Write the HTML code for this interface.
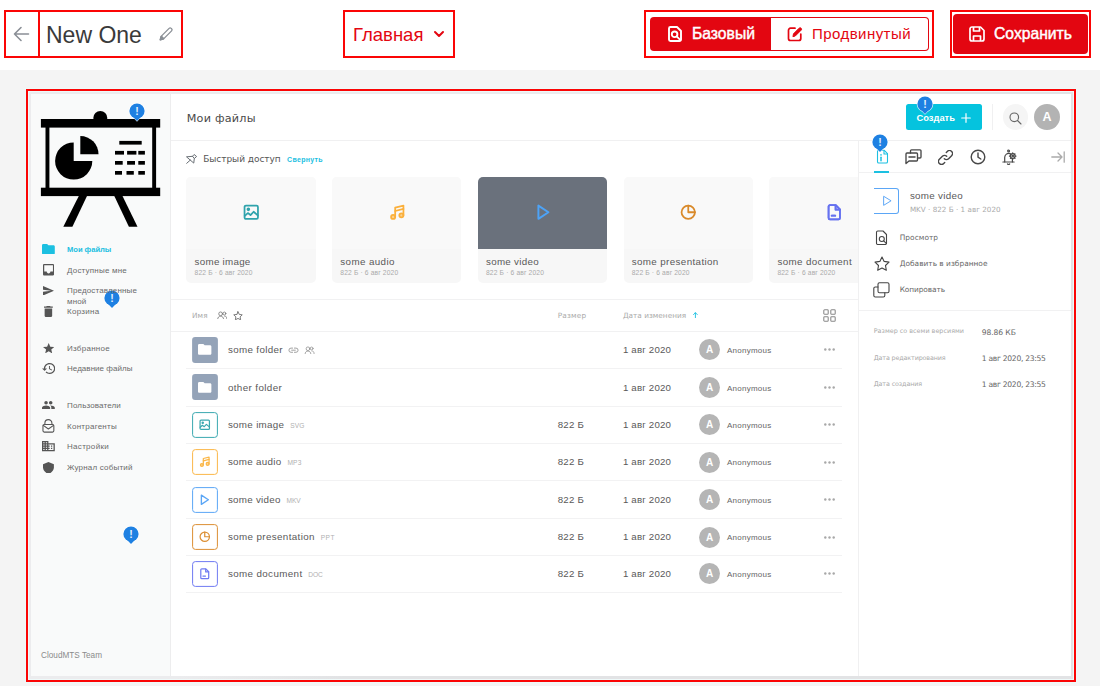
<!DOCTYPE html>
<html lang="ru">
<head>
<meta charset="utf-8">
<title>New One</title>
<style>
*{box-sizing:border-box;margin:0;padding:0}
html,body{width:1100px;height:686px;overflow:hidden;background:#f4f4f4;font-family:"Liberation Sans",sans-serif;}
.a{position:absolute}
.t{position:absolute;white-space:nowrap;line-height:1;}
.rb{position:absolute;border:2px solid #fb0505;}
#top{position:absolute;left:0;top:0;width:1100px;height:70px;background:#fff;}
#pv{position:absolute;left:31px;top:94px;width:1040px;height:582px;background:#fff;overflow:hidden;font-family:"Liberation Sans",sans-serif;color:#555;}
</style>
</head>
<body>
<div id="top">
  <!-- back -->
  <div class="rb" style="left:4px;top:10px;width:36px;height:48px"></div>
  <svg class="a" style="left:13px;top:26px" width="17" height="16" viewBox="0 0 17 16" fill="none" stroke="#8a8f96" stroke-width="1.6" stroke-linecap="round" stroke-linejoin="round"><path d="M15.5 8H1.5M8 1.5L1.5 8L8 14.5"/></svg>
  <!-- title -->
  <div class="rb" style="left:38px;top:10px;width:145px;height:48px"></div>
  <span class="t" id="ttl" style="left:46px;top:24px;font-size:23px;color:#3a3a3a;">New One</span>
  <svg class="a" style="left:158px;top:26px" width="16" height="16" viewBox="0 0 16 16" fill="none" stroke="#8a8f96" stroke-width="1.3" stroke-linejoin="round"><path d="M2.2 13.8l.9-3.4 8-8a1.5 1.5 0 0 1 2.1 0l.4.4a1.5 1.5 0 0 1 0 2.100l-8 8z"/><path d="M3.4 10.200l2.400 2.400" /><path d="M2.200 13.800l.9-3.400 2.500 2.500z" fill="#8a8f96"/></svg>
  <!-- page dropdown -->
  <div class="rb" style="left:343px;top:10px;width:112px;height:48px"></div>
  <span class="t" id="glav" style="left:353px;top:26px;font-size:18.5px;color:#e30611;">Главная</span>
  <svg class="a" style="left:433px;top:30px" width="12" height="9" viewBox="0 0 12 9" fill="none" stroke="#e30611" stroke-width="2" stroke-linecap="round" stroke-linejoin="round"><path d="M2 2l4 4 4-4"/></svg>
  <!-- mode switch -->
  <div class="rb" style="left:644px;top:10px;width:290px;height:48px"></div>
  <div class="a" style="left:650px;top:17px;width:121px;height:34px;background:#e30611;border-radius:4px 0 0 4px"></div>
  <div class="a" style="left:771px;top:17px;width:158px;height:34px;background:#fff;border:1px solid #e30611;border-left:none;border-radius:0 4px 4px 0"></div>
  <svg class="a" style="left:667px;top:26px" width="16" height="16" viewBox="0 0 16 16" fill="none" stroke="#fff" stroke-width="1.900" stroke-linejoin="round"><path d="M2 2.500a1.500 1.500 0 0 1 1.500-1.500h6.500l4 4v8.500a1.500 1.500 0 0 1-1.500 1.500h-9a1.500 1.500 0 0 1-1.500-1.500z"/><circle cx="7.600" cy="8.300" r="2.800"/><path d="M9.700 10.400l3 3" stroke-linecap="round"/></svg>
  <span class="t" id="baz" style="left:692px;top:26px;font-size:15.700px;color:#fff;-webkit-text-stroke:0.45px #fff;">Базовый</span>
  <svg class="a" style="left:787px;top:26px" width="16" height="16" viewBox="0 0 16 16" fill="none" stroke="#e30611" stroke-width="1.700" stroke-linejoin="round" stroke-linecap="round"><path d="M8 2.200h-4.500a2 2 0 0 0-2 2v8.300a2 2 0 0 0 2 2h8.300a2 2 0 0 0 2-2v-4.500"/><path d="M6 10.300l.5-2.500 5.600-5.600a1.400 1.400 0 0 1 2 2l-5.600 5.600z" fill="#e30611" stroke-width="1"/></svg>
  <span class="t" id="prod" style="left:812px;top:26px;font-size:15px;letter-spacing:0.45px;color:#e30611;">Продвинутый</span>
  <!-- save -->
  <div class="rb" style="left:950px;top:10px;width:141px;height:48px"></div>
  <div class="a" style="left:953px;top:14px;width:135px;height:40px;background:#e30611;border-radius:4px"></div>
  <svg class="a" style="left:969px;top:26px" width="16" height="16" viewBox="0 0 16 16" fill="none" stroke="#fff" stroke-width="1.700" stroke-linejoin="round"><path d="M1 3a2 2 0 0 1 2-2h8.500l3.500 3.500v8.500a2 2 0 0 1-2 2h-10a2 2 0 0 1-2-2z"/><path d="M4.500 1v4h6v-4"/><path d="M4.500 15v-5h7v5"/></svg>
  <span class="t" id="save" style="left:994px;top:26px;font-size:15.700px;color:#fff;-webkit-text-stroke:0.45px #fff;">Сохранить</span>
</div>
<!-- preview frame -->
<div class="rb" style="left:26px;top:89px;width:1050px;height:593px;background:linear-gradient(135deg,#ececee 0%,#ececee 45%,#e2e3e5 55%,#e2e3e5 100%);box-shadow:0 0 0 1px #eefafa, inset 0 0 0 1px #eefafa"></div>
<div id="pv"></div>
<div class="a" style="left:31.00px;top:94.00px;width:139.50px;height:582.00px;background:#f9fafa;border-right:1px solid #ededee;"></div>
<div class="a" style="left:170.50px;top:140.00px;width:900.50px;height:1.00px;background:#f0f0f1;"></div>
<div class="a" style="left:170.50px;top:299.00px;width:687.00px;height:1.00px;background:#f1f1f2;"></div>
<div class="a" style="left:170.50px;top:331.00px;width:687.00px;height:1.00px;background:#f1f1f2;"></div>
<svg class="a" style="left:31px;top:94px" width="140" height="140" viewBox="31 94 140 140" fill="#000">
<circle cx="100.3" cy="118" r="7"/>
<rect x="40.900" y="119" width="119.300" height="8.600"/>
<rect x="40.900" y="187.700" width="119.300" height="8.400"/>
<rect x="45.500" y="127" width="3.900" height="61"/>
<rect x="152.200" y="127" width="3.900" height="61"/>
<path d="M73.700 161V142.400A18.600 18.600 0 1 0 92.300 161Z"/>
<path d="M80.300 154.200V136A18.200 18.200 0 0 1 98.500 154.200Z"/>
<rect x="119.300" y="140.900" width="22.400" height="3.700"/>
<g>
<rect x="115" y="150.900" width="9" height="3.700"/><rect x="127.100" y="150.900" width="9.300" height="3.700"/><rect x="138.300" y="150.900" width="6.600" height="3.700"/>
<rect x="115" y="161" width="7.700" height="3.700"/><rect x="127.100" y="161" width="7.900" height="3.700"/><rect x="138.300" y="161" width="6.600" height="3.700"/>
<rect x="115" y="171" width="7" height="3.700"/><rect x="126.500" y="171" width="7.300" height="3.700"/><rect x="138.300" y="171" width="6.600" height="3.700"/>
</g>
<path d="M78.800 196H87L72.400 226.800H63.300Z"/>
<path d="M114.300 196H122.500L137.500 226.800H128.900Z"/>
</svg>
<svg class="a" style="left:42.00px;top:243.80px" width="12.80" height="10.50" viewBox="2 4 20 16" preserveAspectRatio="none" fill="#1cc0e1" ><path d="M10 4H4c-1.1 0-1.990.9-1.990 2L2 18c0 1.100.9 2 2 2h16c1.100 0 2-.9 2-2V8c0-1.100-.9-2-2-2h-8l-2-2z"/></svg>
<svg class="a" style="left:43.00px;top:264.20px" width="11.20" height="11.40" viewBox="3 3 18 18" preserveAspectRatio="none" fill="#555" ><path d="M19 3H4.990c-1.110 0-1.980.890-1.980 2L3 19c0 1.100.880 2 1.990 2H19c1.100 0 2-.9 2-2V5c0-1.110-.9-2-2-2zm0 12h-4c0 1.660-1.350 3-3 3s-3-1.340-3-3H4.990V5H19v10z"/></svg>
<svg class="a" style="left:42.90px;top:285.60px" width="11.30" height="9.50" viewBox="2 3 21 18" preserveAspectRatio="none" fill="#555" ><path d="M2.010 21L23 12 2.010 3 2 10l15 2-15 2z"/></svg>
<svg class="a" style="left:44.20px;top:306.00px" width="8.80" height="11.00" viewBox="5 3 14 18" preserveAspectRatio="none" fill="#555" ><path d="M6 19c0 1.100.9 2 2 2h8c1.100 0 2-.9 2-2V7H6v12zM19 4h-3.500l-1-1h-5l-1 1H5v2h14V4z"/></svg>
<svg class="a" style="left:42.80px;top:342.50px" width="11.40" height="10.40" viewBox="2 2 20 19" preserveAspectRatio="none" fill="#555" ><path d="M12 17.270L18.180 21l-1.640-7.030L22 9.240l-7.190-.610L12 2 9.190 8.630 2 9.240l5.460 4.730L5.820 21z"/></svg>
<svg class="a" style="left:41.50px;top:362.90px" width="13.30" height="10.90" viewBox="1 3 21 18" preserveAspectRatio="none" fill="#555" ><path d="M13 3c-4.970 0-9 4.030-9 9H1l3.890 3.890.070.140L9 12H6c0-3.870 3.130-7 7-7s7 3.130 7 7-3.130 7-7 7c-1.930 0-3.680-.790-4.940-2.060l-1.420 1.420C8.270 19.990 10.510 21 13 21c4.970 0 9-4.030 9-9s-4.030-9-9-9zm-1 5v5l4.280 2.540.720-1.210-3.500-2.080V8H12z"/></svg>
<svg class="a" style="left:42.00px;top:401.00px" width="12.80" height="8.00" viewBox="1 5 22 14" preserveAspectRatio="none" fill="#555" ><path d="M16 11c1.660 0 2.990-1.340 2.990-3S17.660 5 16 5c-1.660 0-3 1.340-3 3s1.340 3 3 3zm-8 0c1.660 0 2.990-1.340 2.990-3S9.660 5 8 5C6.340 5 5 6.340 5 8s1.340 3 3 3zm0 2c-2.330 0-7 1.170-7 3.500V19h14v-2.500c0-2.330-4.670-3.500-7-3.500zm8 0c-.290 0-.620.020-.970.050 1.160.840 1.970 1.970 1.970 3.450V19h6v-2.500c0-2.330-4.670-3.500-7-3.500z"/></svg>
<svg class="a" style="left:42.00px;top:417.90px" width="12.80" height="15.80" viewBox="0 0 20 22.5" fill="none" stroke="#555" stroke-width="1.7" stroke-linecap="round" stroke-linejoin="round" ><rect x="1.500" y="9" width="17" height="12" rx="2"/><path d="M2 10.500l8 5.500 8-5.500"/><path d="M4.500 9V7a5.500 5.500 0 0 1 11 0v2"/></svg>
<svg class="a" style="left:42.00px;top:441.40px" width="12.80" height="10.20" viewBox="2 3 20 18" preserveAspectRatio="none" fill="#555" ><path d="M12 7V3H2v18h20V7H12zM6 19H4v-2h2v2zm0-4H4v-2h2v2zm0-4H4V9h2v2zm0-4H4V5h2v2zm4 12H8v-2h2v2zm0-4H8v-2h2v2zm0-4H8V9h2v2zm0-4H8V5h2v2zm10 12h-8v-2h2v-2h-2v-2h2v-2h-2V9h8v10zm-2-8h-2v2h2v-2zm0 4h-2v2h2v-2z"/></svg>
<svg class="a" style="left:43.30px;top:461.60px" width="10.90" height="11.80" viewBox="3 1 18 22" preserveAspectRatio="none" fill="#555" ><path d="M12 1L3 5v6c0 5.550 3.840 10.740 9 12 5.160-1.260 9-6.450 9-12V5l-9-4z"/></svg>
<div class="a" style="left:906.00px;top:103.90px;width:76.00px;height:25.70px;background:#05c3de;border-radius:2.500px;"></div>
<svg class="a" style="left:961.20px;top:112.80px" width="10.00" height="10.00" viewBox="0 0 10 10" fill="none" stroke="#fff" stroke-width="1.2" stroke-linecap="round" stroke-linejoin="round" ><path d="M5 0.700v8.600M0.700 5h8.600"/></svg>
<div class="a" style="left:992.00px;top:104.00px;width:1.00px;height:25.60px;background:#f0f0f1;"></div>
<div class="a" style="left:1002.90px;top:104.10px;width:25.600px;height:25.600px;border-radius:50%;background:#f5f5f5"></div>
<svg class="a" style="left:1009.40px;top:111.60px" width="13.00" height="13.00" viewBox="0 0 13 13" fill="none" stroke="#666" stroke-width="1.1" stroke-linecap="round" stroke-linejoin="round" ><circle cx="5.300" cy="5.300" r="4.300"/><path d="M8.500 8.500l3.500 3.500"/></svg>
<div class="a" style="left:1034.10px;top:104.00px;width:25.800px;height:25.800px;border-radius:50%;background:#b3b3b3"></div>
<svg class="a" style="left:186.00px;top:154.00px" width="11.50" height="10.00" viewBox="0 0 11.5 10" fill="none" stroke="#686e74" stroke-width="1.0" stroke-linecap="round" stroke-linejoin="round" ><path d="M0.900 2.800L6.500 2.300L8.100 0.500L10.600 2.500L8.300 4.500L7.800 8.700Z"/><path d="M6.500 2.300L8.300 4.500"/><path d="M4.300 6.100L0.700 9.300"/></svg>
<div class="a" style="left:170.500px;top:170px;width:687px;height:120px;overflow:hidden">
<div class="a" style="left:15.90px;top:7px;width:129.300px;height:105.800px;border-radius:5px;background:#f7f7f7;overflow:hidden"><div style="height:71.900px;background:#f9f9f9"></div></div>
<div class="a" style="left:161.60px;top:7px;width:129.300px;height:105.800px;border-radius:5px;background:#f7f7f7;overflow:hidden"><div style="height:71.900px;background:#f9f9f9"></div></div>
<div class="a" style="left:307.30px;top:7px;width:129.300px;height:105.800px;border-radius:5px;background:#f7f7f7;overflow:hidden"><div style="height:71.900px;background:#6a717c"></div></div>
<div class="a" style="left:453.00px;top:7px;width:129.300px;height:105.800px;border-radius:5px;background:#f7f7f7;overflow:hidden"><div style="height:71.900px;background:#f9f9f9"></div></div>
<div class="a" style="left:598.70px;top:7px;width:129.300px;height:105.800px;border-radius:5px;background:#f7f7f7;overflow:hidden"><div style="height:71.900px;background:#f9f9f9"></div></div>
</div>
<svg class="a" style="left:243.20px;top:204.45px" width="16.50" height="16.50" viewBox="0 0 16 16" fill="none" stroke="#2fa3ac" stroke-width="1.7" stroke-linecap="round" stroke-linejoin="round" ><rect x="1.500" y="1.500" width="13" height="13" rx="1.300"/><circle cx="5.200" cy="5.200" r="0.900" fill="#2fa3ac"/><path d="M1.700 11.500l3-2.700 2.600 1.900 3-3.200 4 3.500"/></svg>
<svg class="a" style="left:388.90px;top:204.45px" width="16.50" height="16.50" viewBox="0 0 16 16" fill="none" stroke="#fbb03b" stroke-width="1.7" stroke-linecap="round" stroke-linejoin="round" ><path d="M6 12.500V3.500l8-2v9.500"/><path d="M6 6.800l8-2"/><circle cx="4" cy="12.500" r="2" fill="#fbb03b" fill-opacity="0.550"/><circle cx="12" cy="11" r="2" fill="#fbb03b" fill-opacity="0.550"/></svg>
<svg class="a" style="left:534.60px;top:204.45px" width="16.50" height="16.50" viewBox="0 0 16 16" fill="none" stroke="#4da3f7" stroke-width="1.9" stroke-linecap="round" stroke-linejoin="round" ><path d="M3.300 1.600v12.800l9.700-6.400z"/></svg>
<svg class="a" style="left:680.30px;top:204.45px" width="16.50" height="16.50" viewBox="0 0 16 16" fill="none" stroke="#d98a2b" stroke-width="1.7" stroke-linecap="round" stroke-linejoin="round" ><circle cx="8" cy="8" r="6.500"/><path d="M8 1.500v6.500h6.500"/></svg>
<svg class="a" style="left:826.00px;top:204.45px" width="16.50" height="16.50" viewBox="0 0 16 16" fill="none" stroke="#6672f0" stroke-width="1.7" stroke-linecap="round" stroke-linejoin="round" ><path d="M2.500 2.500a1.300 1.300 0 0 1 1.300-1.300h5.700l4 4v8.300a1.300 1.300 0 0 1-1.300 1.300h-8.400a1.300 1.300 0 0 1-1.300-1.300z"/><path d="M9.300 1.500v4h4"/><path d="M5.500 11.300h3.500"/></svg>
<svg class="a" style="left:825.85px;top:204.45px" width="16.50" height="16.50" viewBox="0 0 16 16" fill="none" stroke="#6672f0" stroke-width="1.7" stroke-linecap="round" stroke-linejoin="round" ><path d="M2.500 2.500a1.300 1.300 0 0 1 1.300-1.300h5.700l4 4v8.300a1.300 1.300 0 0 1-1.300 1.300h-8.400a1.300 1.300 0 0 1-1.300-1.300z"/><path d="M9.300 1.500v4h4"/><path d="M5.500 11.300h3.500"/></svg>
<svg class="a" style="left:216.70px;top:310.70px" width="10.60" height="8.80" viewBox="0 0 16.3 14" fill="none" stroke="#777" stroke-width="1.3" stroke-linecap="round" stroke-linejoin="round" ><circle cx="5.500" cy="4.500" r="3"/><path d="M0.800 13c0-3 2-4.700 4.700-4.700s4.700 1.700 4.700 4.700"/><circle cx="11.500" cy="4" r="2.300"/><path d="M11.800 8c2.200 0 3.700 1.500 3.700 4.300"/></svg>
<svg class="a" style="left:233.30px;top:310.60px" width="10.00" height="9.40" viewBox="0 0 12 11.5" fill="none" stroke="#777" stroke-width="1.2" stroke-linecap="round" stroke-linejoin="round" ><path d="M6 0.900l1.600 3.300 3.600.5-2.600 2.500.6 3.600-3.200-1.700-3.200 1.700.6-3.600-2.600-2.500 3.600-.5z"/></svg>
<svg class="a" style="left:692.90px;top:312.30px" width="4.80" height="6.20" viewBox="0 0 6 8" fill="none" stroke="#1cc0e1" stroke-width="1.2" stroke-linecap="round" stroke-linejoin="round" ><path d="M3 7.500v-6.500M0.600 3.300l2.400-2.400 2.400 2.400"/></svg>
<svg class="a" style="left:822.60px;top:308.60px" width="13.00" height="13.00" viewBox="0 0 13 13" fill="none" stroke="#888" stroke-width="1.05" stroke-linecap="round" stroke-linejoin="round" ><rect x="0.800" y="0.800" width="4.400" height="4.400" rx="0.800"/><rect x="7.800" y="0.800" width="4.400" height="4.400" rx="0.800"/><rect x="0.800" y="7.800" width="4.400" height="4.400" rx="0.800"/><rect x="7.800" y="7.800" width="4.400" height="4.400" rx="0.800"/></svg>
<div class="a" style="left:186.00px;top:368.00px;width:656.00px;height:1.00px;background:#f2f2f3;"></div>
<svg class="a" style="left:190px;top:334.90px" width="30" height="30" viewBox="0 0 30 30"><rect x="2.100" y="2.100" width="25.800" height="25.800" rx="3" fill="#94a3b8"/></svg>
<svg class="a" style="left:198.30px;top:344.30px" width="13.40" height="10.80" viewBox="2 4 20 16" preserveAspectRatio="none" fill="#fff" ><path d="M10 4H4c-1.100 0-1.990.9-1.990 2L2 18c0 1.100.9 2 2 2h16c1.100 0 2-.9 2-2V8c0-1.100-.9-2-2-2h-8l-2-2z"/></svg>
<div class="a" style="left:698.90px;top:339.40px;width:21px;height:21px;border-radius:50%;background:#b5b5b5"></div>
<svg class="a" style="left:823.600px;top:348.40px" width="11" height="3" viewBox="0 0 11 3" fill="#a8a8a8"><circle cx="1.300" cy="1.500" r="1.200"/><circle cx="5.500" cy="1.500" r="1.200"/><circle cx="9.700" cy="1.500" r="1.200"/></svg>
<div class="a" style="left:186.00px;top:405.80px;width:656.00px;height:1.00px;background:#f2f2f3;"></div>
<svg class="a" style="left:190px;top:372.40px" width="30" height="30" viewBox="0 0 30 30"><rect x="2.100" y="2.100" width="25.800" height="25.800" rx="3" fill="#94a3b8"/></svg>
<svg class="a" style="left:198.30px;top:381.80px" width="13.40" height="10.80" viewBox="2 4 20 16" preserveAspectRatio="none" fill="#fff" ><path d="M10 4H4c-1.100 0-1.990.9-1.990 2L2 18c0 1.100.9 2 2 2h16c1.100 0 2-.9 2-2V8c0-1.100-.9-2-2-2h-8l-2-2z"/></svg>
<div class="a" style="left:698.90px;top:376.90px;width:21px;height:21px;border-radius:50%;background:#b5b5b5"></div>
<svg class="a" style="left:823.600px;top:385.90px" width="11" height="3" viewBox="0 0 11 3" fill="#a8a8a8"><circle cx="1.300" cy="1.500" r="1.200"/><circle cx="5.500" cy="1.500" r="1.200"/><circle cx="9.700" cy="1.500" r="1.200"/></svg>
<div class="a" style="left:186.00px;top:443.00px;width:656.00px;height:1.00px;background:#f2f2f3;"></div>
<svg class="a" style="left:190px;top:409.90px" width="30" height="30" viewBox="0 0 30 30"><rect x="2.600" y="2.600" width="24.800" height="24.800" rx="2.800" fill="#fff" stroke="#3aa8b0" stroke-width="1"/></svg>
<svg class="a" style="left:199.25px;top:419.15px" width="11.50" height="11.50" viewBox="0 0 16 16" fill="none" stroke="#3aa8b0" stroke-width="1.7" stroke-linecap="round" stroke-linejoin="round" ><rect x="1.500" y="1.500" width="13" height="13" rx="1.300"/><circle cx="5.200" cy="5.200" r="0.900" fill="#3aa8b0"/><path d="M1.700 11.500l3-2.700 2.600 1.900 3-3.200 4 3.500"/></svg>
<div class="a" style="left:698.90px;top:414.40px;width:21px;height:21px;border-radius:50%;background:#b5b5b5"></div>
<svg class="a" style="left:823.600px;top:423.40px" width="11" height="3" viewBox="0 0 11 3" fill="#a8a8a8"><circle cx="1.300" cy="1.500" r="1.200"/><circle cx="5.500" cy="1.500" r="1.200"/><circle cx="9.700" cy="1.500" r="1.200"/></svg>
<div class="a" style="left:186.00px;top:480.00px;width:656.00px;height:1.00px;background:#f2f2f3;"></div>
<svg class="a" style="left:190px;top:447.00px" width="30" height="30" viewBox="0 0 30 30"><rect x="2.600" y="2.600" width="24.800" height="24.800" rx="2.800" fill="#fff" stroke="#fbb748" stroke-width="1"/></svg>
<svg class="a" style="left:199.25px;top:456.25px" width="11.50" height="11.50" viewBox="0 0 16 16" fill="none" stroke="#fbb748" stroke-width="1.7" stroke-linecap="round" stroke-linejoin="round" ><path d="M6 12.500V3.500l8-2v9.500"/><path d="M6 6.800l8-2"/><circle cx="4" cy="12.500" r="2" fill="#fbb748" fill-opacity="0.550"/><circle cx="12" cy="11" r="2" fill="#fbb748" fill-opacity="0.550"/></svg>
<div class="a" style="left:698.90px;top:451.50px;width:21px;height:21px;border-radius:50%;background:#b5b5b5"></div>
<svg class="a" style="left:823.600px;top:460.50px" width="11" height="3" viewBox="0 0 11 3" fill="#a8a8a8"><circle cx="1.300" cy="1.500" r="1.200"/><circle cx="5.500" cy="1.500" r="1.200"/><circle cx="9.700" cy="1.500" r="1.200"/></svg>
<div class="a" style="left:186.00px;top:518.00px;width:656.00px;height:1.00px;background:#f2f2f3;"></div>
<svg class="a" style="left:190px;top:484.50px" width="30" height="30" viewBox="0 0 30 30"><rect x="2.600" y="2.600" width="24.800" height="24.800" rx="2.800" fill="#fff" stroke="#5ba6f6" stroke-width="1"/></svg>
<svg class="a" style="left:199.25px;top:493.75px" width="11.50" height="11.50" viewBox="0 0 16 16" fill="none" stroke="#5ba6f6" stroke-width="1.9" stroke-linecap="round" stroke-linejoin="round" ><path d="M3.300 1.600v12.800l9.700-6.400z"/></svg>
<div class="a" style="left:698.90px;top:489.00px;width:21px;height:21px;border-radius:50%;background:#b5b5b5"></div>
<svg class="a" style="left:823.600px;top:498.00px" width="11" height="3" viewBox="0 0 11 3" fill="#a8a8a8"><circle cx="1.300" cy="1.500" r="1.200"/><circle cx="5.500" cy="1.500" r="1.200"/><circle cx="9.700" cy="1.500" r="1.200"/></svg>
<div class="a" style="left:186.00px;top:555.10px;width:656.00px;height:1.00px;background:#f2f2f3;"></div>
<svg class="a" style="left:190px;top:522.05px" width="30" height="30" viewBox="0 0 30 30"><rect x="2.600" y="2.600" width="24.800" height="24.800" rx="2.800" fill="#fff" stroke="#dc8f33" stroke-width="1"/></svg>
<svg class="a" style="left:199.25px;top:531.30px" width="11.50" height="11.50" viewBox="0 0 16 16" fill="none" stroke="#dc8f33" stroke-width="1.7" stroke-linecap="round" stroke-linejoin="round" ><circle cx="8" cy="8" r="6.500"/><path d="M8 1.500v6.500h6.500"/></svg>
<div class="a" style="left:698.90px;top:526.55px;width:21px;height:21px;border-radius:50%;background:#b5b5b5"></div>
<svg class="a" style="left:823.600px;top:535.55px" width="11" height="3" viewBox="0 0 11 3" fill="#a8a8a8"><circle cx="1.300" cy="1.500" r="1.200"/><circle cx="5.500" cy="1.500" r="1.200"/><circle cx="9.700" cy="1.500" r="1.200"/></svg>
<div class="a" style="left:186.00px;top:591.80px;width:656.00px;height:1.00px;background:#f2f2f3;"></div>
<svg class="a" style="left:190px;top:558.95px" width="30" height="30" viewBox="0 0 30 30"><rect x="2.600" y="2.600" width="24.800" height="24.800" rx="2.800" fill="#fff" stroke="#6f7af2" stroke-width="1"/></svg>
<svg class="a" style="left:199.25px;top:568.20px" width="11.50" height="11.50" viewBox="0 0 16 16" fill="none" stroke="#6f7af2" stroke-width="1.7" stroke-linecap="round" stroke-linejoin="round" ><path d="M2.500 2.500a1.300 1.300 0 0 1 1.300-1.300h5.700l4 4v8.300a1.300 1.300 0 0 1-1.300 1.300h-8.400a1.300 1.300 0 0 1-1.300-1.300z"/><path d="M9.300 1.500v4h4"/><path d="M5.500 11.300h3.500"/></svg>
<div class="a" style="left:698.90px;top:563.45px;width:21px;height:21px;border-radius:50%;background:#b5b5b5"></div>
<svg class="a" style="left:823.600px;top:572.45px" width="11" height="3" viewBox="0 0 11 3" fill="#a8a8a8"><circle cx="1.300" cy="1.500" r="1.200"/><circle cx="5.500" cy="1.500" r="1.200"/><circle cx="9.700" cy="1.500" r="1.200"/></svg>
<svg class="a" style="left:288.30px;top:346.70px" width="11.00" height="6.40" viewBox="0 0 12 7" fill="none" stroke="#999" stroke-width="1.0" stroke-linecap="round" stroke-linejoin="round" ><path d="M5 1.200h-1.700a2.300 2.300 0 0 0 0 4.600h1.700M7 1.200h1.700a2.300 2.300 0 0 1 0 4.600h-1.700M4 3.500h4"/></svg>
<svg class="a" style="left:303.90px;top:345.70px" width="11.20" height="8.60" viewBox="0 0 16.3 14" fill="none" stroke="#8a8a8a" stroke-width="1.2" stroke-linecap="round" stroke-linejoin="round" ><circle cx="5.500" cy="4.500" r="3"/><path d="M0.800 13c0-3 2-4.700 4.700-4.700s4.700 1.700 4.700 4.700"/><circle cx="11.500" cy="4" r="2.300"/><path d="M11.800 8c2.200 0 3.700 1.500 3.700 4.300"/></svg>
<div class="a" style="left:857.50px;top:141.00px;width:213.50px;height:535.00px;background:#fff;border-left:1px solid #f0f0f1;"></div>
<div class="a" style="left:858.00px;top:172.30px;width:213.00px;height:0.90px;background:#f1f1f2;"></div>
<div class="a" style="left:874.00px;top:171.00px;width:15.00px;height:2.00px;background:#1cc0e1;"></div>
<svg class="a" style="left:875.50px;top:149.40px" width="13.00" height="15.20" viewBox="0 0 13 15.2" fill="none" stroke="#1cc0e1" stroke-width="1.1" stroke-linecap="round" stroke-linejoin="round" ><path d="M1.500 2.500a1.300 1.300 0 0 1 1.300-1.300h5.200l3.500 3.500v8a1.300 1.300 0 0 1-1.300 1.300h-7.400a1.300 1.300 0 0 1-1.300-1.300z"/><path d="M8 1.500v3.500h3.500"/><path d="M5 8.300v3.500" stroke-width="1.500"/><path d="M5 5.900v.100" stroke-width="1.600"/></svg>
<svg class="a" style="left:904.50px;top:149.40px" width="17.00" height="15.50" viewBox="0 0 17 15.5" fill="none" stroke="#484848" stroke-width="1.35" stroke-linecap="round" stroke-linejoin="round" ><path d="M5.500 4v-2.200a1 1 0 0 1 1-1h8.500a1 1 0 0 1 1 1v6.200a1 1 0 0 1-1 1h-1.500"/><path d="M1 5a1 1 0 0 1 1-1h9.500a1 1 0 0 1 1 1v6a1 1 0 0 1-1 1h-7.500l-3 2.600z"/><path d="M4 8h6" stroke-width="1.500"/></svg>
<svg class="a" style="left:937.50px;top:149.70px" width="15.00" height="15.00" viewBox="0 0 15 15" fill="none" stroke="#484848" stroke-width="1.4" stroke-linecap="round" stroke-linejoin="round" ><path d="M6.300 8.700a3 3 0 0 0 4.300 0l3-3a3 3 0 0 0-4.300-4.300l-1 1"/><path d="M8.700 6.300a3 3 0 0 0-4.300 0l-3 3a3 3 0 0 0 4.300 4.300l1-1"/></svg>
<svg class="a" style="left:970.00px;top:149.10px" width="16.00" height="16.00" viewBox="0 0 16 16" fill="none" stroke="#484848" stroke-width="1.4" stroke-linecap="round" stroke-linejoin="round" ><circle cx="8" cy="8" r="6.800"/><path d="M8 4v4.200l2.800 1.800"/></svg>
<svg class="a" style="left:1002.30px;top:148.60px" width="15.00" height="16.50" viewBox="0 0 15 16.5" fill="none" stroke="#484848" stroke-width="1.2" stroke-linecap="round" stroke-linejoin="round" ><path d="M0.900 13h11.200"/><path d="M2.700 13v-4.600a4 4 0 0 1 5.300-3.800"/><path d="M10.400 13v-2.600"/><path d="M5.500 14.900a1.300 1.300 0 0 0 2.200 0"/><circle cx="6.600" cy="1.900" r="0.900"/><circle cx="10.700" cy="7.100" r="2.400"/><circle cx="10.700" cy="7.100" r="0.800"/><path d="M10.700 3.800v.9M10.700 9.500v.9M7.400 7.100h.9M13.100 7.100h.9M8.400 4.800l.6.600M12.400 8.800l.6.600M13 4.800l-.6.600M9 8.800l-.6.600"/></svg>
<svg class="a" style="left:1050.60px;top:151.00px" width="14.00" height="12.00" viewBox="0 0 14 12" fill="none" stroke="#ababab" stroke-width="1.3" stroke-linecap="round" stroke-linejoin="round" ><path d="M0.800 6h10M7 2l4 4-4 4M13.200 0.800v10.400"/></svg>
<div class="a" style="left:874px;top:187.800px;width:25px;height:26px;border:1px solid #5ba6f6;border-left:none;border-radius:0 3px 3px 0"></div>
<svg class="a" style="left:881.20px;top:194.90px" width="12.00" height="12.00" viewBox="0 0 16 16" fill="none" stroke="#5ba6f6" stroke-width="1.3" stroke-linecap="round" stroke-linejoin="round" ><path d="M3.500 2.200v11.600l9.500-5.800z"/></svg>
<svg class="a" style="left:875.30px;top:229.80px" width="13.00" height="15.50" viewBox="0 0 13 15.5" fill="none" stroke="#444" stroke-width="1.1" stroke-linecap="round" stroke-linejoin="round" ><path d="M1.500 2.300a1.300 1.300 0 0 1 1.300-1.300h5.200l3.500 3.500v8.700a1.300 1.300 0 0 1-1.300 1.300h-7.400a1.300 1.300 0 0 1-1.300-1.300z"/><circle cx="6.800" cy="9" r="2.500"/><path d="M8.700 10.900l2.500 2.500"/></svg>
<svg class="a" style="left:874.30px;top:256.30px" width="16.00" height="15.30" viewBox="0 0 16 15.3" fill="none" stroke="#444" stroke-width="1.1" stroke-linecap="round" stroke-linejoin="round" ><path d="M8 1l2.150 4.400 4.850.700-3.500 3.400.830 4.800-4.330-2.300-4.330 2.300.830-4.800-3.500-3.400 4.850-.700z"/></svg>
<svg class="a" style="left:873.30px;top:281.50px" width="17.00" height="16.00" viewBox="0 0 17 16" fill="none" stroke="#444" stroke-width="1.1" stroke-linecap="round" stroke-linejoin="round" ><rect x="5" y="0.800" width="11" height="10" rx="1.500"/><path d="M5 5h-2.700a1.500 1.500 0 0 0-1.500 1.500v7a1.500 1.500 0 0 0 1.500 1.500h8a1.500 1.500 0 0 0 1.500-1.500v-2.700"/></svg>
<div class="a" style="left:858.00px;top:310.00px;width:213.00px;height:1.00px;background:#f1f1f2;"></div>
<svg class="a" style="left:128.10px;top:101.60px" width="18" height="21" viewBox="-9 -9 18 21"><circle r="8.300" fill="#fff" fill-opacity="0.850"/><path d="M-4.200 6.200h8.400l-4.200 4.600z" fill="#fff" fill-opacity="0.850"/><circle r="7.600" fill="#1e80e2"/><path d="M-3.600 6.300h7.200l-3.600 3.700z" fill="#1e80e2"/><text x="0" y="3.700" text-anchor="middle" font-family="Liberation Sans, sans-serif" font-weight="bold" font-size="10.500" fill="#e4f0fc">!</text></svg>
<svg class="a" style="left:102.60px;top:289.40px" width="18" height="21" viewBox="-9 -9 18 21"><circle r="8.300" fill="#fff" fill-opacity="0.850"/><path d="M-4.200 6.200h8.400l-4.200 4.600z" fill="#fff" fill-opacity="0.850"/><circle r="7.600" fill="#1e80e2"/><path d="M-3.600 6.300h7.200l-3.600 3.700z" fill="#1e80e2"/><text x="0" y="3.700" text-anchor="middle" font-family="Liberation Sans, sans-serif" font-weight="bold" font-size="10.500" fill="#e4f0fc">!</text></svg>
<svg class="a" style="left:122.00px;top:525.00px" width="18" height="21" viewBox="-9 -9 18 21"><circle r="8.300" fill="#fff" fill-opacity="0.850"/><path d="M-4.200 6.200h8.400l-4.200 4.600z" fill="#fff" fill-opacity="0.850"/><circle r="7.600" fill="#1e80e2"/><path d="M-3.600 6.300h7.200l-3.600 3.700z" fill="#1e80e2"/><text x="0" y="3.700" text-anchor="middle" font-family="Liberation Sans, sans-serif" font-weight="bold" font-size="10.500" fill="#e4f0fc">!</text></svg>
<svg class="a" style="left:915.60px;top:94.60px" width="18" height="21" viewBox="-9 -9 18 21"><circle r="8.300" fill="#fff" fill-opacity="0.850"/><path d="M-4.200 6.200h8.400l-4.200 4.600z" fill="#fff" fill-opacity="0.850"/><circle r="7.600" fill="#1e80e2"/><path d="M-3.600 6.300h7.200l-3.600 3.700z" fill="#1e80e2"/><text x="0" y="3.700" text-anchor="middle" font-family="Liberation Sans, sans-serif" font-weight="bold" font-size="10.500" fill="#e4f0fc">!</text></svg>
<svg class="a" style="left:870.50px;top:133.00px" width="18" height="21" viewBox="-9 -9 18 21"><circle r="8.300" fill="#fff" fill-opacity="0.850"/><path d="M-4.200 6.200h8.400l-4.200 4.600z" fill="#fff" fill-opacity="0.850"/><circle r="7.600" fill="#1e80e2"/><path d="M-3.600 6.300h7.200l-3.600 3.700z" fill="#1e80e2"/><text x="0" y="3.700" text-anchor="middle" font-family="Liberation Sans, sans-serif" font-weight="bold" font-size="10.500" fill="#e4f0fc">!</text></svg>
<span class="t" id="m1" style="left:67.00px;top:246.20px;font-size:7.6px;color:#1cc0e1;font-weight:bold;letter-spacing:-0.033px;">Мои файлы</span>
<span class="t" id="m2" style="left:67.00px;top:267.10px;font-size:8.0px;color:#6a6a6a;letter-spacing:0.212px;">Доступные мне</span>
<span class="t" id="m3" style="left:67.00px;top:286.80px;font-size:8.0px;color:#6a6a6a;letter-spacing:0.150px;">Предоставленные</span>
<span class="t" id="m3b" style="left:67.00px;top:298.30px;font-size:8.0px;color:#6a6a6a;letter-spacing:0.164px;">мной</span>
<span class="t" id="m4" style="left:67.00px;top:307.90px;font-size:8.0px;color:#6a6a6a;letter-spacing:0.288px;">Корзина</span>
<span class="t" id="m5" style="left:67.00px;top:344.90px;font-size:8.0px;color:#6a6a6a;letter-spacing:0.273px;">Избранное</span>
<span class="t" id="m6" style="left:67.00px;top:364.90px;font-size:8.0px;color:#6a6a6a;letter-spacing:0.042px;">Недавние файлы</span>
<span class="t" id="m7" style="left:67.00px;top:401.60px;font-size:8.0px;color:#6a6a6a;letter-spacing:0.148px;">Пользователи</span>
<span class="t" id="m8" style="left:67.00px;top:422.70px;font-size:8.0px;color:#6a6a6a;letter-spacing:0.261px;">Контрагенты</span>
<span class="t" id="m9" style="left:67.00px;top:442.90px;font-size:8.0px;color:#6a6a6a;letter-spacing:0.307px;">Настройки</span>
<span class="t" id="m10" style="left:67.00px;top:463.60px;font-size:8.0px;color:#6a6a6a;letter-spacing:0.194px;">Журнал событий</span>
<span class="t" id="foot" style="left:41.00px;top:652.00px;font-size:8.2px;color:#8a8a8a;letter-spacing:0.013px;">CloudMTS Team</span>
<span class="t" id="h1" style="left:186.70px;top:112.80px;font-size:11.2px;color:#4a4a4a;letter-spacing:0.222px;font-family:'DejaVu Sans','Liberation Sans',sans-serif;">Мои файлы</span>
<span class="t" id="create" style="left:916.40px;top:114.00px;font-size:9.3px;color:#fff;font-weight:bold;letter-spacing:0.052px;">Создать</span>
<span class="t" id="av" style="left:1042.60px;top:111.30px;font-size:12.5px;color:#fff;font-weight:bold;letter-spacing:-0.231px;">A</span>
<span class="t" id="qa" style="left:203.20px;top:155.20px;font-size:9.0px;color:#555;letter-spacing:-0.053px;font-family:'DejaVu Sans','Liberation Sans',sans-serif;">Быстрый доступ</span>
<span class="t" id="qa2" style="left:287.00px;top:155.60px;font-size:7px;color:#1cc0e1;font-weight:bold;letter-spacing:0.328px;">Свернуть</span>
<span class="t" id="c0" style="left:194.60px;top:256.80px;font-size:9.8px;color:#595959;letter-spacing:0.263px;">some image</span>
<span class="t" id="cs0" style="left:194.60px;top:269.80px;font-size:6.7px;color:#aaa;letter-spacing:0.146px;">822 Б · 6 авг 2020</span>
<span class="t" id="c1" style="left:340.30px;top:256.80px;font-size:9.8px;color:#595959;letter-spacing:0.384px;">some audio</span>
<span class="t" id="cs1" style="left:340.30px;top:269.80px;font-size:6.7px;color:#aaa;letter-spacing:0.146px;">822 Б · 6 авг 2020</span>
<span class="t" id="c2" style="left:486.00px;top:256.80px;font-size:9.8px;color:#595959;letter-spacing:0.289px;">some video</span>
<span class="t" id="cs2" style="left:486.00px;top:269.80px;font-size:6.7px;color:#aaa;letter-spacing:0.146px;">822 Б · 6 авг 2020</span>
<span class="t" id="c3" style="left:631.70px;top:256.80px;font-size:9.8px;color:#595959;letter-spacing:0.376px;">some presentation</span>
<span class="t" id="cs3" style="left:631.70px;top:269.80px;font-size:6.7px;color:#aaa;letter-spacing:0.146px;">822 Б · 6 авг 2020</span>
<span class="t" id="c4" style="left:777.40px;top:256.80px;font-size:9.8px;color:#595959;letter-spacing:0.377px;">some document</span>
<span class="t" id="cs4" style="left:777.40px;top:269.80px;font-size:6.7px;color:#aaa;letter-spacing:0.146px;">822 Б · 6 авг 2020</span>
<span class="t" id="th1" style="left:191.90px;top:311.90px;font-size:7.3px;color:#aaa;letter-spacing:0.147px;font-family:'DejaVu Sans','Liberation Sans',sans-serif;">Имя</span>
<span class="t" id="th2" style="left:557.70px;top:311.90px;font-size:7.3px;color:#aaa;letter-spacing:0.218px;font-family:'DejaVu Sans','Liberation Sans',sans-serif;">Размер</span>
<span class="t" id="th3" style="left:622.90px;top:311.90px;font-size:7.3px;color:#aaa;letter-spacing:0.014px;font-family:'DejaVu Sans','Liberation Sans',sans-serif;">Дата изменения</span>
<span class="t" id="r0" style="left:227.90px;top:345.20px;font-size:9.8px;color:#595959;letter-spacing:0.356px;">some folder</span>
<span class="t" id="rd0" style="left:622.90px;top:345.30px;font-size:9.7px;color:#595959;letter-spacing:0.181px;">1 авг 2020</span>
<span class="t" id="ra0" style="left:706.00px;top:345.40px;font-size:10px;color:#fff;font-weight:bold;letter-spacing:-0.334px;">A</span>
<span class="t" id="rn0" style="left:727.00px;top:347.00px;font-size:8px;color:#666;letter-spacing:0.239px;">Anonymous</span>
<span class="t" id="r1" style="left:227.90px;top:382.70px;font-size:9.8px;color:#595959;letter-spacing:0.395px;">other folder</span>
<span class="t" id="rd1" style="left:622.90px;top:382.80px;font-size:9.7px;color:#595959;letter-spacing:0.181px;">1 авг 2020</span>
<span class="t" id="ra1" style="left:706.00px;top:382.90px;font-size:10px;color:#fff;font-weight:bold;letter-spacing:-0.334px;">A</span>
<span class="t" id="rn1" style="left:727.00px;top:384.50px;font-size:8px;color:#666;letter-spacing:0.239px;">Anonymous</span>
<span class="t" id="r2" style="left:227.90px;top:420.20px;font-size:9.8px;color:#595959;letter-spacing:0.312px;">some image</span>
<span class="t" id="re2" style="left:290.20px;top:423.10px;font-size:6.6px;color:#b0b0b0;letter-spacing:0.087px;">SVG</span>
<span class="t" id="rs2" style="left:557.70px;top:420.30px;font-size:9.7px;color:#595959;letter-spacing:0.256px;">822 Б</span>
<span class="t" id="rd2" style="left:622.90px;top:420.30px;font-size:9.7px;color:#595959;letter-spacing:0.181px;">1 авг 2020</span>
<span class="t" id="ra2" style="left:706.00px;top:420.40px;font-size:10px;color:#fff;font-weight:bold;letter-spacing:-0.334px;">A</span>
<span class="t" id="rn2" style="left:727.00px;top:422.00px;font-size:8px;color:#666;letter-spacing:0.239px;">Anonymous</span>
<span class="t" id="r3" style="left:227.90px;top:457.30px;font-size:9.8px;color:#595959;letter-spacing:0.304px;">some audio</span>
<span class="t" id="re3" style="left:287.40px;top:460.20px;font-size:6.6px;color:#b0b0b0;letter-spacing:0.212px;">MP3</span>
<span class="t" id="rs3" style="left:557.70px;top:457.40px;font-size:9.7px;color:#595959;letter-spacing:0.256px;">822 Б</span>
<span class="t" id="rd3" style="left:622.90px;top:457.40px;font-size:9.7px;color:#595959;letter-spacing:0.181px;">1 авг 2020</span>
<span class="t" id="ra3" style="left:706.00px;top:457.50px;font-size:10px;color:#fff;font-weight:bold;letter-spacing:-0.334px;">A</span>
<span class="t" id="rn3" style="left:727.00px;top:459.10px;font-size:8px;color:#666;letter-spacing:0.239px;">Anonymous</span>
<span class="t" id="r4" style="left:227.90px;top:494.80px;font-size:9.8px;color:#595959;letter-spacing:0.269px;">some video</span>
<span class="t" id="re4" style="left:286.50px;top:497.70px;font-size:6.6px;color:#b0b0b0;letter-spacing:-0.032px;">MKV</span>
<span class="t" id="rs4" style="left:557.70px;top:494.90px;font-size:9.7px;color:#595959;letter-spacing:0.256px;">822 Б</span>
<span class="t" id="rd4" style="left:622.90px;top:494.90px;font-size:9.7px;color:#595959;letter-spacing:0.181px;">1 авг 2020</span>
<span class="t" id="ra4" style="left:706.00px;top:495.00px;font-size:10px;color:#fff;font-weight:bold;letter-spacing:-0.334px;">A</span>
<span class="t" id="rn4" style="left:727.00px;top:496.60px;font-size:8px;color:#666;letter-spacing:0.239px;">Anonymous</span>
<span class="t" id="r5" style="left:227.90px;top:532.35px;font-size:9.8px;color:#595959;letter-spacing:0.376px;">some presentation</span>
<span class="t" id="re5" style="left:320.70px;top:535.25px;font-size:6.6px;color:#b0b0b0;letter-spacing:0.457px;">PPT</span>
<span class="t" id="rs5" style="left:557.70px;top:532.45px;font-size:9.7px;color:#595959;letter-spacing:0.256px;">822 Б</span>
<span class="t" id="rd5" style="left:622.90px;top:532.45px;font-size:9.7px;color:#595959;letter-spacing:0.181px;">1 авг 2020</span>
<span class="t" id="ra5" style="left:706.00px;top:532.55px;font-size:10px;color:#fff;font-weight:bold;letter-spacing:-0.334px;">A</span>
<span class="t" id="rn5" style="left:727.00px;top:534.15px;font-size:8px;color:#666;letter-spacing:0.239px;">Anonymous</span>
<span class="t" id="r6" style="left:227.90px;top:569.25px;font-size:9.8px;color:#595959;letter-spacing:0.377px;">some document</span>
<span class="t" id="re6" style="left:308.30px;top:572.15px;font-size:6.6px;color:#b0b0b0;letter-spacing:-0.152px;">DOC</span>
<span class="t" id="rs6" style="left:557.70px;top:569.35px;font-size:9.7px;color:#595959;letter-spacing:0.256px;">822 Б</span>
<span class="t" id="rd6" style="left:622.90px;top:569.35px;font-size:9.7px;color:#595959;letter-spacing:0.181px;">1 авг 2020</span>
<span class="t" id="ra6" style="left:706.00px;top:569.45px;font-size:10px;color:#fff;font-weight:bold;letter-spacing:-0.334px;">A</span>
<span class="t" id="rn6" style="left:727.00px;top:571.05px;font-size:8px;color:#666;letter-spacing:0.239px;">Anonymous</span>
<span class="t" id="iv" style="left:909.90px;top:190.50px;font-size:9.8px;color:#595959;letter-spacing:0.289px;">some video</span>
<span class="t" id="ivs" style="left:909.90px;top:205.80px;font-size:7.2px;color:#aaa;letter-spacing:0.015px;font-family:'DejaVu Sans','Liberation Sans',sans-serif;">MKV · 822 Б · 1 авг 2020</span>
<span class="t" id="a1" style="left:899.70px;top:234.10px;font-size:7.4px;color:#666;letter-spacing:0.058px;font-family:'DejaVu Sans','Liberation Sans',sans-serif;">Просмотр</span>
<span class="t" id="a2" style="left:899.70px;top:259.90px;font-size:7.4px;color:#666;letter-spacing:0.014px;font-family:'DejaVu Sans','Liberation Sans',sans-serif;">Добавить в избранное</span>
<span class="t" id="a3" style="left:899.70px;top:286.10px;font-size:7.4px;color:#666;letter-spacing:-0.087px;font-family:'DejaVu Sans','Liberation Sans',sans-serif;">Копировать</span>
<span class="t" id="k1" style="left:873.70px;top:328.40px;font-size:6.4px;color:#aaa;letter-spacing:0.016px;font-family:'DejaVu Sans','Liberation Sans',sans-serif;">Размер со всеми версиями</span>
<span class="t" id="v1" style="left:981.80px;top:328.70px;font-size:7.6px;color:#666;letter-spacing:-0.096px;font-family:'DejaVu Sans','Liberation Sans',sans-serif;">98.86 КБ</span>
<span class="t" id="k2" style="left:873.70px;top:354.60px;font-size:6.4px;color:#aaa;letter-spacing:-0.140px;font-family:'DejaVu Sans','Liberation Sans',sans-serif;">Дата редактирования</span>
<span class="t" id="v2" style="left:981.80px;top:354.70px;font-size:7.6px;color:#666;letter-spacing:-0.296px;font-family:'DejaVu Sans','Liberation Sans',sans-serif;">1 авг 2020, 23:55</span>
<span class="t" id="k3" style="left:873.70px;top:380.80px;font-size:6.4px;color:#aaa;letter-spacing:-0.125px;font-family:'DejaVu Sans','Liberation Sans',sans-serif;">Дата создания</span>
<span class="t" id="v3" style="left:981.80px;top:380.70px;font-size:7.6px;color:#666;letter-spacing:-0.296px;font-family:'DejaVu Sans','Liberation Sans',sans-serif;">1 авг 2020, 23:55</span>
</body>
</html>
